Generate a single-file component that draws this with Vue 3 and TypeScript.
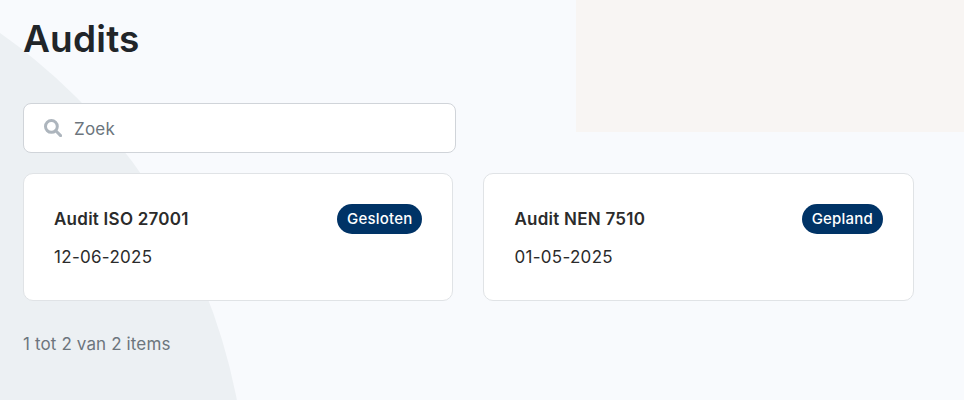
<script setup lang="ts">
interface Audit {
  title: string
  date: string
  status: string
}
const audits: Audit[] = [
  { title: 'Audit ISO 27001', date: '12-06-2025', status: 'Gesloten' },
  { title: 'Audit NEN 7510', date: '01-05-2025', status: 'Gepland' },
]
</script>

<template>
  <div class="page">
    <div class="blob"></div>
    <div class="tint"></div>
    <main class="content">
      <h1 class="title">Audits</h1>
      <label class="search">
        <svg class="icon" viewBox="0 0 18 18" aria-hidden="true">
          <circle cx="7.4" cy="7.4" r="5.9" />
          <path d="M11.8 11.8 L16.6 16.6" />
        </svg>
        <input class="input" type="text" placeholder="Zoek" />
      </label>
      <section class="cards">
        <article v-for="a in audits" :key="a.title" class="card">
          <div class="card-head">
            <span class="card-title">{{ a.title }}</span>
            <span class="badge">{{ a.status }}</span>
          </div>
          <div class="card-date">{{ a.date }}</div>
        </article>
      </section>
      <p class="count">1 tot 2 van 2 items</p>
    </main>
  </div>
</template>

<style>
html, body { margin: 0; padding: 0; background: #f8fafd; }
</style>

<style scoped>
.page {
  position: relative;
  width: 964px;
  height: 400px;
  overflow: hidden;
  background: #f8fafd;
  font-family: Inter, "Liberation Sans", sans-serif;
  font-optical-sizing: none;
}
.blob {
  position: absolute;
  left: -913px;
  top: -72px;
  width: 1160px;
  height: 1160px;
  border-radius: 50%;
  background: #ecf0f3;
}
.tint {
  position: absolute;
  left: 576px;
  top: 0;
  width: 388px;
  height: 132px;
  background: #f8f5f3;
}
.content {
  position: relative;
  padding: 0 50px 0 23px;
  display: flex;
  flex-direction: column;
}
.title {
  margin: 17px 0 0;
  font-size: 37px;
  line-height: 44px;
  font-weight: 600;
  color: #212529;
  letter-spacing: 0.2px;
}
.search {
  margin-top: 42px;
  box-sizing: border-box;
  width: 433px;
  height: 50px;
  display: flex;
  align-items: center;
  gap: 12px;
  padding: 0 20px;
  background: #fff;
  border: 1px solid #d0d4d9;
  border-radius: 8px;
}
.icon {
  width: 18px;
  height: 18px;
  flex: none;
  fill: none;
  stroke: #adb5bd;
  stroke-width: 3;
  stroke-linecap: round;
}
.input {
  flex: 1;
  min-width: 0;
  border: 0;
  outline: 0;
  padding: 1px 0 0;
  background: transparent;
  font: 400 17px Inter, "Liberation Sans", sans-serif;
  font-optical-sizing: none;
  letter-spacing: 0.2px;
  color: #212529;
}
.input::placeholder {
  color: #6c757d;
  opacity: 1;
}
.cards {
  margin-top: 20px;
  display: grid;
  grid-template-columns: 430.4px 430.6px;
  gap: 30px;
}
.card {
  box-sizing: border-box;
  height: 128px;
  padding: 30px;
  background: #fff;
  border: 1px solid #e0e3e6;
  border-radius: 10px;
}
.card-head {
  display: flex;
  align-items: center;
  justify-content: space-between;
}
.card-title {
  font-size: 17px;
  line-height: 30px;
  font-weight: 600;
  color: #2b2b2b;
  letter-spacing: 0.25px;
}
.badge {
  padding: 0 10px;
  height: 30px;
  line-height: 30px;
  border-radius: 15px;
  background: #003366;
  color: #fff;
  font-size: 15px;
  font-weight: 500;
  letter-spacing: 0.2px;
}
.card-date {
  margin-top: 11px;
  font-size: 17px;
  line-height: 24px;
  color: #2b2b2b;
  letter-spacing: 0.3px;
}
.count {
  margin: 31px 0 0;
  font-size: 17px;
  line-height: 24px;
  color: #6c757d;
  letter-spacing: 0.13px;
}
</style>
